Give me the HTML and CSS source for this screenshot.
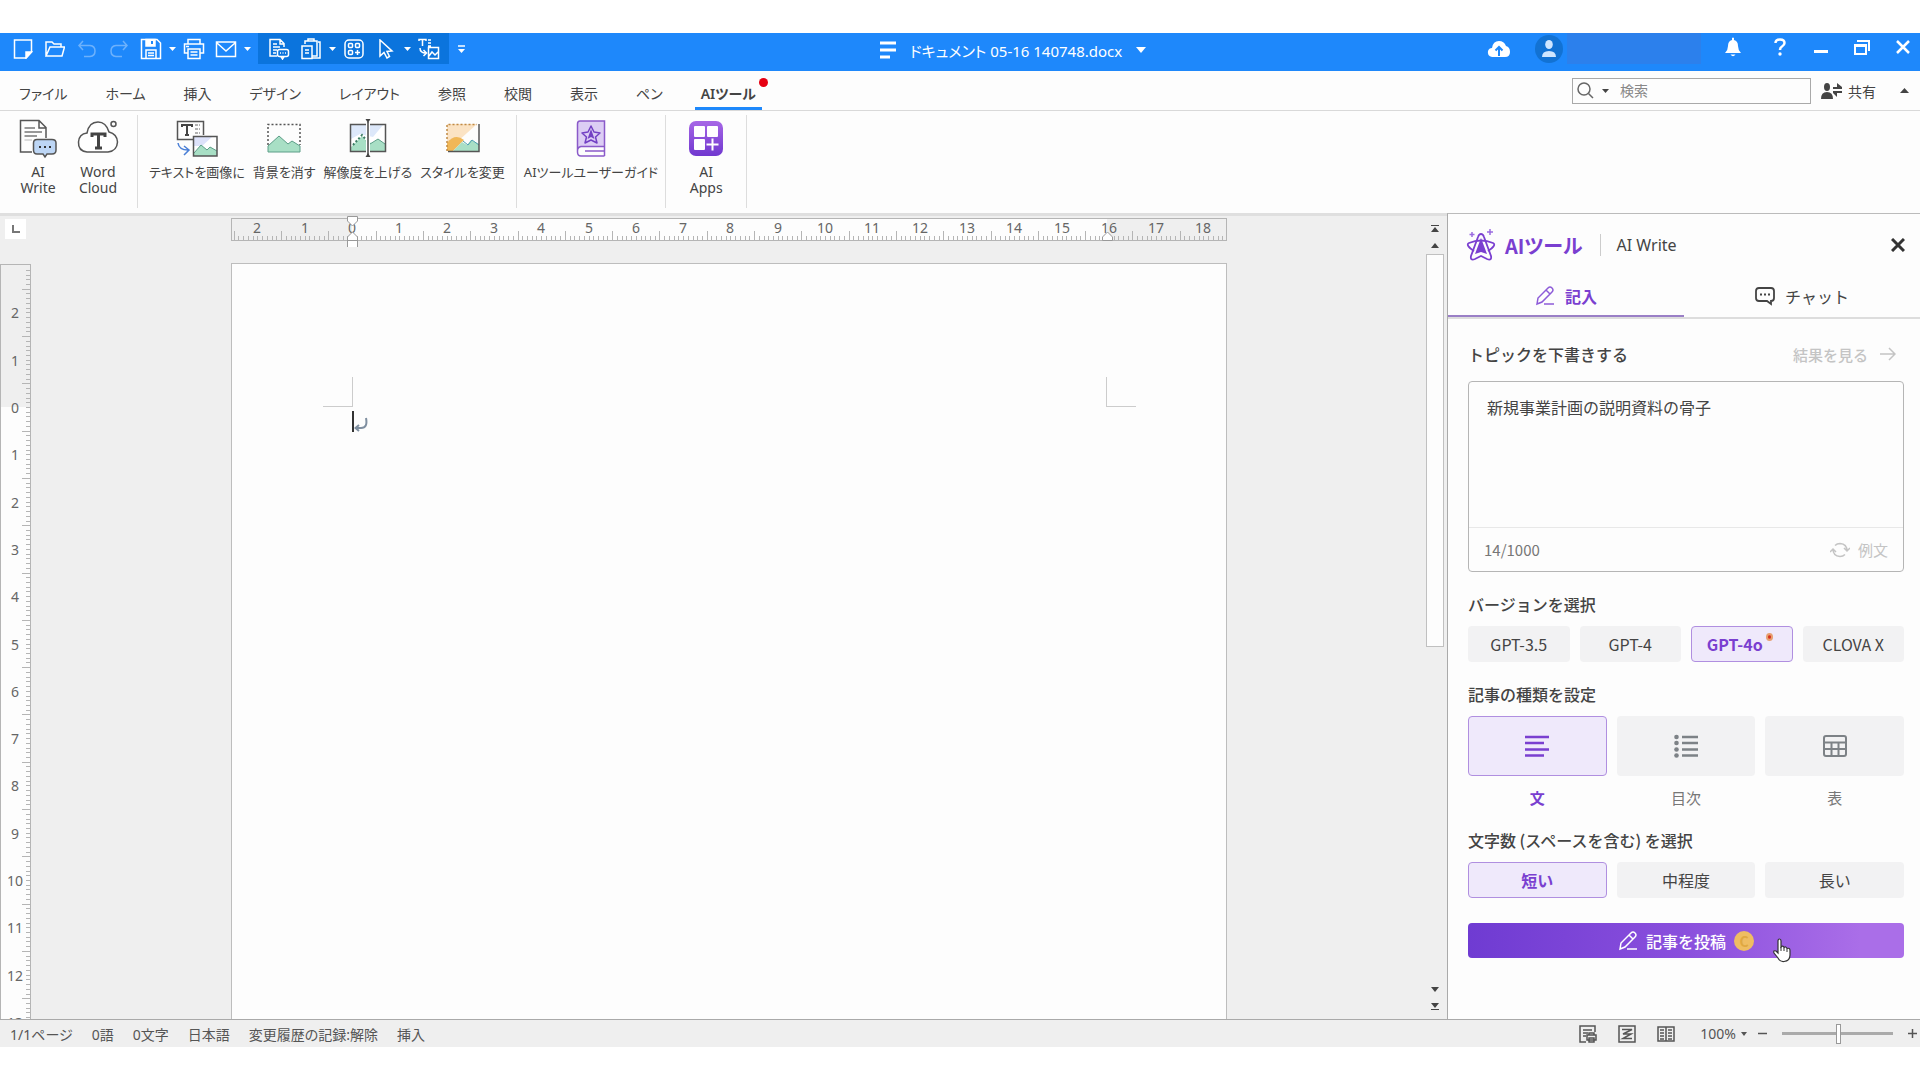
FILE: index.html
```html
<!DOCTYPE html>
<html lang="ja">
<head>
<meta charset="UTF-8" />
<meta name="viewport" content="width=device-width, initial-scale=1" />
<title>ドキュメント 05-16 140748.docx</title>
<link rel="stylesheet" href="styles.css">
</head>
<body>

<div class="app">
  <header class="titlebar">
    <div class="quick">
      <button aria-label="新規"><svg width="20" height="20" viewBox="0 0 20 20"><path d="M1.500 1H18.500V13L13 19H1.500Z"/><path d="M18.500 13H13V19Z" fill="#fff"/></svg></button>
      <button aria-label="開く"><svg width="20" height="20" viewBox="0 0 20 20"><path d="M1 17V3H7L9 5H16V8M1 17L5 8H19.500L17 17Z"/></svg></button>
      <button class="off" aria-label="元に戻す"><svg width="20" height="20" viewBox="0 0 20 20"><path d="M6 2L2 6.500L6 11M2 6.500H13Q18 7 18 12Q18 17 13 17.500H7"/></svg></button>
      <button class="off" aria-label="やり直し"><svg width="20" height="20" viewBox="0 0 20 20"><path d="M14 2L18 6.500L14 11M18 6.500H7Q2 7 2 12Q2 17 7 17.500H13"/></svg></button>
      <button aria-label="保存"><svg width="22" height="22" viewBox="0 0 22 22"><path d="M1.500 1.500H17L20.500 5V20.500H1.500ZM6 20V12H16V20M8 15H14M8 17.500H14"/><path d="M6 1.500H15V8H6Z" fill="#fff"/><path d="M12 3V6" stroke="#1e88fb" stroke-width="2"/></svg></button>
      <button class="drop" aria-label="保存オプション"><svg width="7" height="4" viewBox="0 0 7 4"><path class="solid" d="M0 0H7L3.500 4Z"/></svg></button>
      <button aria-label="印刷"><svg width="22" height="22" viewBox="0 0 22 22"><path d="M5 6V1.500H17V6M5 15H1.500V6H20.500V15H17M5 11H17V20.500H5ZM7.500 14H14.500M7.500 17H14.500M3 8.500H6"/></svg></button>
      <button aria-label="メール"><svg width="22" height="22" viewBox="0 0 22 22"><path d="M1.500 4H20.500V18.500H1.500ZM2 5L11 13L20 5"/></svg></button>
      <button class="drop" aria-label="メールオプション"><svg width="7" height="4" viewBox="0 0 7 4"><path class="solid" d="M0 0H7L3.500 4Z"/></svg></button>
      <div class="quick-group">
        <button aria-label="AI Write"><svg width="22" height="22" viewBox="0 0 22 22"><path d="M9 18H2V1.500H12L16 5.500V9M12 2V6H16M5 6H9M5 9H12M5 12H9M5 15H8"/><rect x="9.500" y="11.500" width="11" height="7" rx="2"/><path d="M13 18.500L14.500 21L16 18.500M12 15H13M14.500 15H15.500M17 15H18"/></svg></button>
        <button aria-label="貼り付け"><svg width="22" height="22" viewBox="0 0 22 22"><path d="M5 6V3H17V18H12M8 3V1H14V3M18 4H20V20H12M2 8H12V20.500H2ZM5 12H9M5 15H9"/></svg></button>
        <button class="drop" aria-label="貼り付けオプション"><svg width="7" height="4" viewBox="0 0 7 4"><path class="solid" d="M0 0H7L3.500 4Z"/></svg></button>
        <button aria-label="AI Apps"><svg width="20" height="20" viewBox="0 0 20 20"><rect x="1" y="1" width="18" height="18" rx="4"/><rect x="4.500" y="4.500" width="4" height="4" rx="1"/><rect x="11.500" y="4.500" width="4" height="4" rx="1"/><rect x="4.500" y="11.500" width="4" height="4" rx="1"/><path d="M13.500 11V16M11 13.500H16"/></svg></button>
        <button aria-label="選択"><svg width="20" height="20" viewBox="0 0 20 20"><path d="M4 1V17L8 13.500L11 19L13.500 17.500L11 12.500L16 12Z"/></svg></button>
        <button class="drop" aria-label="選択オプション"><svg width="7" height="4" viewBox="0 0 7 4"><path class="solid" d="M0 0H7L3.500 4Z"/></svg></button>
        <button aria-label="テキストを画像に"><svg width="22" height="22" viewBox="0 0 22 22"><path d="M1 3V1.500H8V3M4.500 1.500V8M10 2H13M10 5H13M10 8H13M2 10Q2 15 8 15M5.500 12L8.500 15L5.500 18M10.500 9.500H20.500V20.500H10.500ZM11 18L14 14L17 17L20 14"/></svg></button>
      </div>
      <button class="drop more" aria-label="カスタマイズ"><svg width="7" height="8" viewBox="0 0 7 8"><path d="M0 1H7"/><path class="solid" d="M0 4H7L3.500 8Z"/></svg></button>
    </div>

    <div class="doc-title">
      <svg width="16" height="18" viewBox="0 0 16 18"><path d="M0 2H16M0 9H16M0 16H10" stroke-width="3"/></svg>
      <span>ドキュメント 05-16 140748.docx</span>
      <svg width="10" height="6" viewBox="0 0 10 6"><path class="solid" d="M0 0H10L5 6Z"/></svg>
    </div>

    <div class="account">
      <button aria-label="クラウド"><svg width="24" height="18" viewBox="0 0 24 18"><path class="solid" d="M5 17Q0 16 1 11Q2 8 5 8Q6 1 12 1Q17 1 19 6Q23 7 23 12Q23 17 18 17Z"/><path d="M12 16V8M8.500 10.500L12 7L15.500 10.500" stroke="#1e88fb" stroke-width="2"/></svg></button>
      <button class="avatar" aria-label="アカウント"><svg width="14" height="17" viewBox="0 0 14 17"><ellipse cx="7" cy="4.500" rx="3.800" ry="4.500" fill="#cfe6ff" stroke="none"/><path d="M0 17Q0 11 7 11Q14 11 14 17Z" fill="#cfe6ff" stroke="none"/></svg></button>
      <span class="user-name"></span>
    </div>
    <div class="window-tools">
      <button class="bell" aria-label="通知"><svg width="16" height="20" viewBox="0 0 16 20"><path class="solid" d="M7 1Q8 0 9 1V3Q13 4 13 9Q13 13 16 16H0Q3 13 3 9Q3 4 7 3ZM5.500 17.500H10.500Q8 21 5.500 17.500Z"/></svg></button>
      <button aria-label="ヘルプ"><svg width="12" height="18" viewBox="0 0 12 18"><path d="M1.500 5Q1.500 1.500 6 1.500Q10.500 1.500 10.500 5Q10.500 7 8 8.500Q6 9.500 6 12" stroke-width="2.500"/><circle class="solid" cx="6" cy="16" r="1.700"/></svg></button>
      <button aria-label="最小化"><svg width="14" height="14" viewBox="0 0 14 14"><path d="M0 11.500H14" stroke-width="3"/></svg></button>
      <button aria-label="元のサイズに戻す"><svg width="16" height="16" viewBox="0 0 16 16"><path d="M1 6H12V15H1ZM1 7H12M3 2H15V12" stroke-width="2"/></svg></button>
      <button aria-label="閉じる"><svg width="14" height="14" viewBox="0 0 14 14"><path d="M1 1L13 13M13 1L1 13" stroke-width="2.500"/></svg></button>
    </div>
  </header>

  <nav class="menu">
    <button>ファイル</button>
    <button>ホーム</button>
    <button>挿入</button>
    <button>デザイン</button>
    <button>レイアウト</button>
    <button>参照</button>
    <button>校閲</button>
    <button>表示</button>
    <button>ペン</button>
    <button class="active">AIツール<span class="dot"></span></button>
    <label class="search">
      <svg width="17" height="17" viewBox="0 0 17 17"><circle cx="7" cy="7" r="6"/><path d="M11.500 11.500L16 16"/></svg>
      <svg width="7" height="4" viewBox="0 0 7 4"><path class="dark" d="M0 0H7L3.500 4Z"/></svg>
      <input type="text" placeholder="検索" aria-label="検索" />
    </label>
    <button class="share"><svg width="21" height="16" viewBox="0 0 21 16"><path class="dark" d="M6 0Q9 0 9 4Q9 8 6 8Q3 8 3 4Q3 0 6 0ZM0 16Q0 9 6 9Q12 9 12 16ZM12 4H16V0L21 4V6H12ZM21 8H12V10L16 14V10H21Z"/></svg>共有</button>
    <button class="fold" aria-label="リボンを折りたたむ"><svg width="9" height="5" viewBox="0 0 9 5"><path class="dark" d="M0 5H9L4.500 0Z"/></svg></button>
  </nav>

  <section class="ribbon">
    <div class="group first">
      <button class="tool">
        <svg width="38" height="40" viewBox="0 0 38 40"><path d="M13 33H1.500V1.500H20L27 8.500V19M20 2V9H27" fill="none" stroke="#555" stroke-width="1.500"/><path d="M5.500 9H16M5.500 13H23M5.500 17H18" stroke="#777" stroke-width="1.500"/><path d="M5.500 21H13" stroke="#bbb"/><path d="M18 20.500H33Q37 20.500 37 24V31Q37 35 33 35H28L26 38L24 35H18Q14.500 35 14.500 31V24Q14.500 20.500 18 20.500Z" fill="#bdd6f5" stroke="#555" stroke-width="1.500"/><path d="M20 28H22M25 28H27M30 28H32" stroke="#333" stroke-width="2"/></svg>
        <span>AI<br>Write</span>
      </button>
      <button class="tool">
        <svg width="42" height="40" viewBox="0 0 42 40"><path d="M10 33Q1 32 1.500 23Q2 15 10 14Q12 3 21 3Q29 3 32 13Q40 15 40.500 23Q40 32 31 33Z" fill="#fff" stroke="#555" stroke-width="1.500"/><path d="M15 18V15H28V18M21.500 15V29M18 29H25" fill="none" stroke="#444" stroke-width="3"/><circle cx="36.500" cy="5" r="2.500" fill="none" stroke="#555" stroke-width="1.500"/></svg>
        <span>Word<br>Cloud</span>
      </button>
    </div>
    <div class="group images">
      <button class="tool">
        <svg width="42" height="40" viewBox="0 0 42 40"><path d="M18 20.500H1.500V2.500H27.500V16" fill="none" stroke="#555" stroke-width="1.500"/><path d="M6 8V6H16V8M11 6V16M9 16H13" fill="none" stroke="#444" stroke-width="2"/><path d="M19 6H24M19 10H24M19 14H24" stroke="#666" stroke-dasharray="3 1"/><path d="M2 24Q3 31 12 31M8 27L13 31L8 36" fill="none" stroke="#4a7fd6" stroke-width="1.500"/><path d="M17.500 17.500H41V37H17.500Z" fill="#fff"/><path d="M18 18H36L26 27H18Z" fill="#dde2fa"/><path d="M18 34L25 26L31 31L34 28L41 32V37H18Z" fill="#a8dfc5"/><path d="M18 34L25 26L31 31L34 28L41 32" fill="none" stroke="#5c9e88"/><path d="M17.500 17.500H41V37H17.500Z" fill="none" stroke="#555" stroke-width="1.500"/></svg>
        <span>テキストを画像に</span>
      </button>
      <button class="tool">
        <svg width="36" height="40" viewBox="0 0 36 40"><path d="M2 26V5.500H34V26" fill="none" stroke="#555" stroke-width="1.500" stroke-dasharray="2 2"/><path d="M2 27L13 17L22 25L26 22L34 27V33H2Z" fill="#a8dfc5" stroke="#5c9e88"/></svg>
        <span>背景を消す</span>
      </button>
      <button class="tool">
        <svg width="38" height="40" viewBox="0 0 38 40"><path d="M1.500 5.500H36.500V32.500H1.500Z" fill="#fff"/><path d="M2 6H34L24 18L11 15L2 20Z" fill="#dde8fa"/><path d="M2 28L13 17L18 23L23 24L29 20L36 25V32H2Z" fill="#a8dfc5"/><path d="M21 25L29 20L36 25" fill="none" stroke="#5c9e88"/><path d="M4 26L13 16L18 22" fill="none" stroke="#3c7c64" stroke-width="2" stroke-dasharray="2 2"/><path d="M1.500 5.500H36.500V32.500H1.500Z" fill="none" stroke="#555" stroke-width="1.500"/><path d="M19 4V34" stroke="#fff" stroke-width="4"/><path d="M19 3V36" stroke="#444" stroke-width="1.500"/><path d="M16.500 0H21.500L19 4ZM16.500 38H21.500L19 34Z" fill="#444"/></svg>
        <span>解像度を上げる</span>
      </button>
      <button class="tool">
        <svg width="36" height="40" viewBox="0 0 36 40"><path d="M2 5H32L2 32Z" fill="#fbe3c4"/><path d="M2 32V24Q10 14 19 21L8 32Z" fill="#f0b757"/><path d="M8 32L17 23L22 26L26 21L34 25V32Z" fill="#a8dfc5"/><path d="M18 22L23 26L27 21L34 26" fill="none" stroke="#4e9fb0"/><path d="M2 32V5.500H32" fill="none" stroke="#c08a45" stroke-width="1.500" stroke-dasharray="2 2"/><path d="M34 5V32.500H3" fill="none" stroke="#555" stroke-width="1.500"/></svg>
        <span>スタイルを変更</span>
      </button>
    </div>
    <div class="group guide">
      <button class="tool">
        <svg width="30" height="40" viewBox="0 0 30 40"><path d="M4 2H28.500V27H5Q1.500 27 1.500 32V5Q1.500 2 4 2Z" fill="#dccdf4"/><path d="M28.500 28V2H4Q1.500 2 1.500 5V33Q1.500 37 5 37H28.500M28.500 27.500H5Q1.500 28 1.500 32M28.500 27V37M9 32H28" fill="none" stroke="#8a5ac9" stroke-width="1.500"/><path d="M15 7L18 13L24 14L19.500 18L21 24L15 21L9 24L10.500 18L6 14L12 13Z" fill="#dccdf4" stroke="#7340c4" stroke-width="1.500" stroke-linejoin="round"/><path d="M15 10L18.500 20L15 18L11.500 20Z" fill="#7340c4"/></svg>
        <span>AIツールユーザーガイド</span>
      </button>
    </div>
    <div class="group apps">
      <button class="tool">
        <svg width="36" height="40" viewBox="0 0 36 40"><defs><linearGradient id="appsFill" x1="0" y1="0" x2="0" y2="1"><stop offset="0" stop-color="#a767e6"/><stop offset="1" stop-color="#7038cf"/></linearGradient></defs><rect x="1" y="2" width="34" height="35" rx="7" fill="url(#appsFill)"/><rect x="6" y="7" width="11" height="11" rx="1" fill="#fff"/><rect x="19" y="7" width="11" height="11" rx="1" fill="#fff"/><rect x="6" y="20" width="11" height="11" rx="1" fill="#fff"/><path d="M24.500 19.500V31.500M18.500 25.500H30.500" stroke="#fff" stroke-width="2"/></svg>
        <span>AI<br>Apps</span>
      </button>
    </div>
  </section>

  <main class="workspace">
    <div class="canvas">
      <div class="side-ruler">
        <button class="tab-stop" aria-label="タブ位置"><svg width="8" height="8" viewBox="0 0 8 8"><path d="M1 0V7H8" fill="none" stroke="#777" stroke-width="2"/></svg></button>
        <div class="ruler-v"><svg id="rulerV" width="31" height="100%"></svg></div>
      </div>
      <div class="editor">
        <svg id="rulerH" class="ruler-h" width="996" height="24"></svg>
        <article class="page">
          <div class="marks"><span class="mark-left"></span><span class="mark-right"></span></div>
          <div class="line">
            <span class="caret"></span>
            <svg width="14" height="16" viewBox="0 0 14 16"><path d="M12 2Q14 12 7 12H2M5 9L1.500 12L5 15" fill="none" stroke="#7f8fa0" stroke-width="2"/></svg>
          </div>
        </article>
      </div>
      <div class="scroll">
        <button aria-label="前のページ"><svg width="8" height="7" viewBox="0 0 8 7"><path class="dark" d="M0 0H8V1H0ZM0 7H8L4 2Z"/></svg></button>
        <button aria-label="上へ"><svg width="8" height="5" viewBox="0 0 8 5"><path class="dark" d="M0 5H8L4 0Z"/></svg></button>
        <div class="track"><div class="thumb"></div></div>
        <button aria-label="下へ"><svg width="8" height="5" viewBox="0 0 8 5"><path class="dark" d="M0 0H8L4 5Z"/></svg></button>
        <button aria-label="次のページ"><svg width="8" height="7" viewBox="0 0 8 7"><path class="dark" d="M0 6H8V7H0ZM0 0H8L4 5Z"/></svg></button>
      </div>
    </div>

    <aside class="panel">
      <div class="panel-head">
        <svg width="30" height="34" viewBox="0 0 30 34"><g fill="none" stroke="#7a3fd0" stroke-width="1.800"><path d="M15 6Q17 6 18 9L25 28Q26 33 21 31L15 28L9 31Q4 33 5 28L12 9Q13 6 15 6Z"/><path d="M8 23Q-1 17 3 15Q15 10 27 15Q31 17 22 23"/></g><path d="M15 10L21 26L15 24L9 26Z" fill="#7a3fd0"/><path d="M6 4V9M3.500 6.500H8.500M24 1V7M21 4H27" stroke="#9a6be0" stroke-width="1.500"/></svg>
        <h2>AIツール</h2>
        <span class="feature">AI Write</span>
        <button class="close" aria-label="閉じる"><svg width="14" height="14" viewBox="0 0 14 14"><path d="M1 1L13 13M13 1L1 13" stroke="#333" stroke-width="3"/></svg></button>
      </div>
      <div class="panel-tabs">
        <button class="active"><svg width="20" height="20" viewBox="0 0 20 20"><path d="M2 18L3 12L13 2Q15 0 17 2Q19 4 17 6L7 16ZM11 4L15 8M9 18H19" fill="none" stroke="#8d5bd8" stroke-width="1.500"/></svg>記入</button>
        <button><svg width="20" height="20" viewBox="0 0 20 20"><path d="M4 2H16Q19 2 19 5V12Q19 15 16 15V18L12 15H4Q1 15 1 12V5Q1 2 4 2Z" fill="none" stroke="#444" stroke-width="1.800"/><path d="M5 8.500H7M9 8.500H11M13 8.500H15" stroke="#444" stroke-width="2"/></svg>チャット</button>
      </div>

      <form class="compose">
        <div class="topic-head">
          <label for="topic">トピックを下書きする</label>
          <button type="button" disabled>結果を見る<svg width="16" height="14" viewBox="0 0 16 14"><path d="M0 7H15M9 1L15 7L9 13" fill="none" stroke="#c4c4c4" stroke-width="1.500"/></svg></button>
        </div>
        <div class="topic-box">
          <textarea id="topic" maxlength="1000">新規事業計画の説明資料の骨子</textarea>
          <div class="topic-foot">
            <span>14/1000</span>
            <button type="button" disabled><svg width="20" height="16" viewBox="0 0 20 16"><path d="M17 9Q17 2 10 1.500Q7 1.500 5 3.500M3 7Q3 14 10 14.500Q13 14.500 15 12.500M14 6L17 9L20 6M0 10L3 7L6 10" fill="none" stroke="#c4c4c4" stroke-width="1.500"/></svg>例文</button>
          </div>
        </div>

        <h3>バージョンを選択</h3>
        <div class="options four">
          <button type="button">GPT-3.5</button>
          <button type="button">GPT-4</button>
          <button type="button" class="selected">GPT-4o<span class="badge"></span></button>
          <button type="button">CLOVA X</button>
        </div>

        <h3>記事の種類を設定</h3>
        <div class="options three kinds">
          <div class="kind on">
            <button type="button" class="selected" aria-labelledby="kindText"><svg width="24" height="24" viewBox="0 0 24 24"><path d="M0 3H24M0 9H19M0 15.500H24M0 21.500H19" stroke="#7a3fd0" stroke-width="2.500"/></svg></button>
            <span id="kindText">文</span>
          </div>
          <div class="kind">
            <button type="button" aria-labelledby="kindToc"><svg width="24" height="24" viewBox="0 0 24 24"><path d="M8 3H24M8 9H24M8 15.500H24M8 21.500H24" stroke="#7d8286" stroke-width="2.500"/><g fill="#7d8286"><circle cx="2.500" cy="3" r="2.300"/><circle cx="2.500" cy="9" r="2.300"/><circle cx="2.500" cy="15.500" r="2.300"/><circle cx="2.500" cy="21.500" r="2.300"/></g></svg></button>
            <span id="kindToc">目次</span>
          </div>
          <div class="kind">
            <button type="button" aria-labelledby="kindTable"><svg width="24" height="24" viewBox="0 0 24 24"><rect x="1" y="2" width="22" height="20" rx="2" fill="none" stroke="#7d8286" stroke-width="2"/><path d="M1 8.500H23M1 15H23M8.500 9V22M15.500 9V22" stroke="#7d8286" stroke-width="2"/></svg></button>
            <span id="kindTable">表</span>
          </div>
        </div>

        <h3 class="length-title">文字数 (スペースを含む) を選択</h3>
        <div class="options three">
          <button type="button" class="selected">短い</button>
          <button type="button">中程度</button>
          <button type="button">長い</button>
        </div>

        <button type="button" class="submit">
          <svg width="20" height="20" viewBox="0 0 20 20"><path d="M2 18L3 12L13 2Q15 0 17 2Q19 4 17 6L7 16ZM11 4L15 8M9 18H19" fill="none" stroke="#fff" stroke-width="1.500"/></svg>
          記事を投稿
          <span class="coin">C</span>
          <svg class="pointer" width="20" height="25" viewBox="0 0 20 25"><path d="M6 15V3Q6 1 7.500 1Q9 1 9 3V9Q11 7 12 9.500Q14 8 15 10.500Q18 9.500 18 12.500V17Q18 23 12 23.500Q8 24 6 20L2 15Q1 12 4 13Z" fill="#fff" stroke="#333" stroke-width="1.200"/><path d="M9 9V13M12 10V13M15 11V14" stroke="#333"/></svg>
        </button>
      </form>
    </aside>
  </main>

  <footer class="status">
    <span>1/1ページ</span>
    <span>0語</span>
    <span>0文字</span>
    <span>日本語</span>
    <span>変更履歴の記録:解除</span>
    <span>挿入</span>
    <div class="views">
      <button aria-label="印刷レイアウト"><svg width="18" height="18" viewBox="0 0 18 18"><path d="M7 17H1V1H16V7M4 5H13M4 8H9M4 11H7M8 10H17V15H8ZM10 10V8H15V10M10 13H15V17H10Z"/></svg></button>
      <button aria-label="Webレイアウト"><svg width="18" height="18" viewBox="0 0 18 18"><path d="M1 1H17V17H1ZM4 4.500H14L5 9H13L5 13.500H14"/></svg></button>
      <button aria-label="読み取り"><svg width="18" height="18" viewBox="0 0 18 18"><path d="M1 2H17V16H1ZM9 2V16M3 5H7M3 8H7M3 11H7M11 5H15M11 8H15M11 11H15M3 14H7M11 14H15"/></svg></button>
    </div>
    <button class="zoom">100%<svg width="6" height="4" viewBox="0 0 6 4"><path class="dark" d="M0 0H6L3 4Z"/></svg></button>
    <button aria-label="縮小"><svg width="9" height="9" viewBox="0 0 9 9"><path d="M0 4.500H9"/></svg></button>
    <input type="range" min="0" max="200" value="101" aria-label="ズーム" />
    <button aria-label="拡大"><svg width="9" height="9" viewBox="0 0 9 9"><path d="M0 4.500H9M4.500 0V9"/></svg></button>
  </footer>
</div>

<script src="script.js"></script>
</body>
</html>
```
FILE: styles.css
```css
* {
  box-sizing: border-box;
}
body {
  margin: 0;
  padding: 33px 0;
  background: #fff;
  color: #444;
  font-family: "Noto Sans", "Noto Sans CJK JP", sans-serif;
  font-size: 14px;
}
button, input, textarea {
  font: inherit;
  color: inherit;
}
button {
  display: flex;
  align-items: center;
  justify-content: center;
  padding: 0;
  border: none;
  background: none;
  white-space: nowrap;
  cursor: pointer;
}
svg {
  flex: none;
}
.dark {
  fill: #444;
  stroke: none;
}
.app {
  display: flex;
  flex-direction: column;
  height: calc(100vh - 66px);
  min-height: 860px;
  overflow: hidden;
  background: #fdfdfd;
}

/* title bar */
.titlebar {
  display: flex;
  align-items: flex-start;
  height: 38px;
  flex: none;
  padding: 0 0 0 7px;
  background: #1e88fb;
  color: #fff;
}
.titlebar svg {
  fill: none;
  stroke: #fff;
  stroke-width: 1.500;
}
.titlebar .solid {
  fill: #fff;
  stroke: none;
}
.quick, .quick-group {
  display: flex;
  height: 31px;
}
.quick button {
  width: 32px;
  height: 31px;
}
.quick .drop {
  width: 11px;
}
.quick .off {
  opacity: 0.35;
}
.quick-group {
  margin: 0 7px 0 5px;
  padding: 0 4px 0 5px;
  background: #0b74dd;
}
.doc-title {
  display: flex;
  align-items: center;
  gap: 14px;
  height: 34px;
  margin: 0 auto;
  padding-left: 72px;
  font-size: 15px;
  font-feature-settings: "palt";
}
.account, .window-tools {
  display: flex;
  align-items: center;
  height: 31px;
}
.account {
  gap: 24px;
}
.avatar {
  width: 28px;
  height: 28px;
  border-radius: 50%;
  background: #1272d3;
}
.user-name {
  width: 134px;
  height: 31px;
  margin-left: -20px;
  background: #2c80ec;
}
.window-tools {
  gap: 7px;
  height: 27px;
  padding-left: 15px;
}
.window-tools button {
  width: 34px;
}
.window-tools .bell {
  margin-right: 6px;
}

/* menu */
.menu {
  display: flex;
  align-items: center;
  flex: none;
  height: 40px;
  padding: 0 5px 0 0;
  border-bottom: 1px solid #d9d9d9;
  font-feature-settings: "palt";
}
.menu button {
  height: 39px;
  margin: 0 13px;
  padding: 4px 6px 0;
}
.menu .active {
  position: relative;
  border-bottom: 3px solid #1e88fb;
  padding-top: 7px;
  font-weight: 600;
}
.dot {
  position: absolute;
  top: 7px;
  right: -6px;
  width: 9px;
  height: 9px;
  border-radius: 50%;
  background: #e60012;
}
.search {
  display: flex;
  align-items: center;
  gap: 8px;
  width: 239px;
  height: 26px;
  margin-left: auto;
  padding: 0 4px;
  border: 1px solid #a9a9a9;
}
.search svg {
  fill: none;
  stroke: #666;
  stroke-width: 1.500;
}
.search input {
  flex: 1;
  min-width: 0;
  padding: 0 0 0 3px;
  border: none;
  outline: none;
  background: none;
}
.search input::placeholder {
  color: #888;
}
.menu .share {
  gap: 6px;
  margin: 0 12px 0 4px;
  padding-top: 0;
}
.menu .fold {
  margin: 0;
  padding-top: 0;
}

/* ribbon */
.ribbon {
  display: flex;
  flex: none;
  height: 102px;
  padding: 4px 0 5px;
  font-feature-settings: "palt";
}
.group {
  display: flex;
  border-right: 1px solid #ddd;
}
.first {
  gap: 20px;
  padding: 0 18px 0 19px;
}
.images {
  gap: 8px;
  padding: 0 11px;
  font-size: 13px;
}
.guide {
  padding: 0 7px;
  font-size: 13px;
}
.apps {
  padding: 0 22px;
}
.tool {
  flex-direction: column;
  justify-content: flex-start;
  gap: 5px;
  min-width: 36px;
  padding-top: 4px;
  line-height: 16px;
}

/* workspace */
.workspace {
  display: flex;
  flex: 1;
  min-height: 0;
}
.canvas {
  display: flex;
  flex: 1;
  min-width: 0;
  border-top: 3px solid #dfdfdf;
  background: #efefef;
}
.side-ruler {
  display: flex;
  flex-direction: column;
  width: 31px;
}
.tab-stop {
  width: 21px;
  height: 20px;
  margin: 3px 0 25px 5px;
  flex: none;
  background: #fff;
}
.ruler-v {
  flex: 1;
  min-height: 0;
  overflow: hidden;
  border: 1px solid #b5b5b5;
  border-bottom: none;
}
.editor {
  display: flex;
  flex-direction: column;
  align-items: center;
  flex: 1;
  min-width: 0;
  overflow: hidden;
}
.ruler-h {
  margin: 2px 0 21px;
  overflow: visible;
}
.ruler-h text, .ruler-v text {
  fill: #666;
  font-size: 14px;
  text-anchor: middle;
}
.page {
  width: 996px;
  flex: 1;
  padding: 113px 90px 0 91px;
  border: 1px solid #bdbdbd;
  border-bottom: none;
  background: #fdfdfd;
}
.marks {
  display: flex;
  justify-content: space-between;
}
.marks span {
  width: 30px;
  height: 30px;
  border-bottom: 1px solid #ccc;
}
.mark-left {
  border-right: 1px solid #ccc;
}
.mark-right {
  border-left: 1px solid #ccc;
}
.line {
  display: flex;
  align-items: flex-end;
  height: 25px;
  padding-left: 29px;
}
.caret {
  width: 2px;
  height: 21px;
  background: #333;
}
.scroll {
  display: flex;
  flex-direction: column;
  width: 18px;
  margin-right: 3px;
  padding: 4px 0;
}
.scroll button {
  height: 17px;
}
.track {
  flex: 1;
}
.thumb {
  height: 54%;
  border: 1px solid #c0c0c0;
  background: #fdfdfd;
}

/* AI panel */
.panel {
  width: 473px;
  border-top: 1px solid #bbb;
  border-left: 1px solid #aaa;
  background: #fdfdfd;
  font-family: "Noto Sans CJK JP", "Noto Sans", sans-serif;
  font-size: 16px;
}
.panel-head {
  display: flex;
  align-items: center;
  height: 62px;
  padding: 0 15px 0 18px;
}
.panel-head h2 {
  margin: 0 17px 0 9px;
  color: #7a3fd0;
  font-size: 20px;
  font-weight: 700;
  font-feature-settings: "palt";
}
.feature {
  padding-left: 16px;
  border-left: 1px solid #ccc;
  font-family: "Noto Sans", sans-serif;
}
.close {
  margin-left: auto;
}
.panel-tabs {
  display: flex;
  border-bottom: 2px solid #ddd;
}
.panel-tabs button {
  flex: 1;
  gap: 10px;
  height: 41px;
  border-bottom: 2px solid transparent;
}
.panel-tabs .active {
  color: #7a3fd0;
  border-color: #9a7fc6;
  font-weight: 700;
}
.compose {
  padding: 23px 16px 0 20px;
}
.topic-head, .topic-foot {
  display: flex;
  align-items: center;
  justify-content: space-between;
}
.topic-head {
  height: 24px;
  padding-right: 8px;
  margin-bottom: 15px;
  font-weight: 500;
}
.topic-head button, .topic-foot button {
  gap: 12px;
  color: #c4c4c4;
  font-size: 15px;
}
.topic-foot button {
  gap: 8px;
}
.topic-box {
  height: 191px;
  display: flex;
  flex-direction: column;
  border: 1px solid #b5b5b5;
  border-radius: 4px;
}
.topic-box textarea {
  flex: 1;
  padding: 13px 18px;
  border: none;
  outline: none;
  resize: none;
  background: none;
  line-height: 24px;
}
.topic-foot {
  height: 44px;
  padding: 0 15px;
  border-top: 1px solid #e8e8e8;
  color: #777;
  font-size: 15px;
}
.compose h3 {
  margin: 20px 0 10px;
  font-size: 16px;
  font-weight: 500;
  line-height: 24px;
}
.options {
  display: grid;
  gap: 10px;
}
.four {
  grid-template-columns: repeat(4, 1fr);
}
.three {
  grid-template-columns: repeat(3, 1fr);
}
.options button {
  width: 100%;
  height: 36px;
  border: 1px solid transparent;
  border-radius: 4px;
  background: #f2f2f3;
}
.options .selected {
  border-color: #b08fe0;
  background: #efe9fb;
  color: #7a3fd0;
  font-weight: 700;
}
.badge {
  width: 7px;
  height: 8px;
  margin: 0 4px 14px 3px;
  border-radius: 50%;
  background: radial-gradient(#d8301c 1px, #e6a070 2px);
}
.options .kind button {
  height: 60px;
}
.kind span {
  display: block;
  margin-top: 10px;
  font-size: 15px;
  line-height: 24px;
  text-align: center;
  color: #777;
}
.kind.on span {
  color: #7a3fd0;
  font-weight: 700;
}
.compose .length-title {
  margin-top: 18px;
}
.submit {
  position: relative;
  gap: 8px;
  width: 100%;
  height: 35px;
  margin-top: 25px;
  border-radius: 4px;
  background: linear-gradient(90deg, #6f3bd2, #8a4fdd 50%, #aa6ee8 90%);
  color: #fff;
  font-weight: 500;
}
.coin {
  width: 20px;
  height: 20px;
  border-radius: 50%;
  background: #efbd62;
  color: #e0a840;
  font-size: 14px;
  font-weight: 700;
  line-height: 20px;
}
.pointer {
  position: absolute;
  top: 15px;
  right: 112px;
}

/* status bar */
.status {
  display: flex;
  align-items: center;
  flex: none;
  gap: 19px;
  height: 28px;
  padding: 0 3px 0 10px;
  border-top: 1px solid #a9a9a9;
  background: #efefef;
  color: #555;
  font-feature-settings: "palt";
}
.status svg {
  fill: none;
  stroke: #555;
  stroke-width: 1.500;
}
.status .dark {
  fill: #555;
  stroke: none;
}
.views {
  display: flex;
  gap: 21px;
  margin-left: auto;
}
.zoom {
  gap: 5px;
  margin: 0 -8px 0 6px;
}
.status input {
  appearance: none;
  width: 111px;
  height: 20px;
  margin: 0 -4px;
  background: linear-gradient(#aaa, #aaa) center / 100% 3px no-repeat;
}
.status input::-webkit-slider-thumb {
  appearance: none;
  width: 5px;
  height: 20px;
  border: 1px solid #999;
  background: #fff;
}
```
FILE: script.js
```js
const CM = 47.3;
const NS = 'http://www.w3.org/2000/svg';

function add(svg, name, attrs, text) {
  const el = document.createElementNS(NS, name);
  for (const key in attrs) el.setAttribute(key, attrs[key]);
  if (text !== undefined) el.textContent = text;
  svg.appendChild(el);
}

function drawHorizontal() {
  const svg = document.getElementById('rulerH');
  const zero = 121;
  const end = 876;
  add(svg, 'rect', { x: 0.5, y: 0.5, width: 995, height: 22, fill: '#efefef', stroke: '#b5b5b5' });
  add(svg, 'rect', { x: zero, y: 1, width: end - zero, height: 21, fill: '#fdfdfd' });
  for (let i = -25; i <= 184; i++) {
    const x = Math.round(zero + i * CM / 10) + 0.5;
    const tall = Math.abs(i % 10) === 5;
    add(svg, 'path', { d: `M${x} 22V${tall ? 13 : 18}`, stroke: '#b5b5b5' });
  }
  for (let n = -2; n <= 18; n++) {
    add(svg, 'text', { x: Math.round(zero + n * CM), y: 15 }, Math.abs(n));
  }
  // indent markers
  add(svg, 'path', { d: 'M116.500 -1.500H126.500V3L121.500 8L116.500 3Z', fill: '#fff', stroke: '#999' });
  add(svg, 'path', { d: 'M116.500 29V19L121.500 14L126.500 19V29M116.500 22.500H126.500', fill: '#fff', stroke: '#999' });
  add(svg, 'path', { d: 'M876.500 14L881.500 19V22.500H871.500V19Z', fill: '#fff', stroke: '#999' });
}

function drawVertical() {
  const svg = document.getElementById('rulerV');
  const zero = 142;
  const cms = Math.ceil((svg.getBoundingClientRect().height - zero) / CM);
  add(svg, 'rect', { x: 0, y: zero, width: 29, height: '100%', fill: '#fdfdfd' });
  for (let i = -29; i <= cms * 10; i++) {
    const y = Math.round(zero + i * CM / 10) + 0.5;
    const tall = Math.abs(i % 10) === 5;
    add(svg, 'path', { d: `M29 ${y}H${tall ? 21 : 25}`, stroke: '#b5b5b5' });
  }
  for (let n = -2; n <= cms; n++) {
    add(svg, 'text', { x: 14, y: Math.round(zero + n * CM) + 6 }, Math.abs(n));
  }
}

drawHorizontal();
drawVertical();
```
